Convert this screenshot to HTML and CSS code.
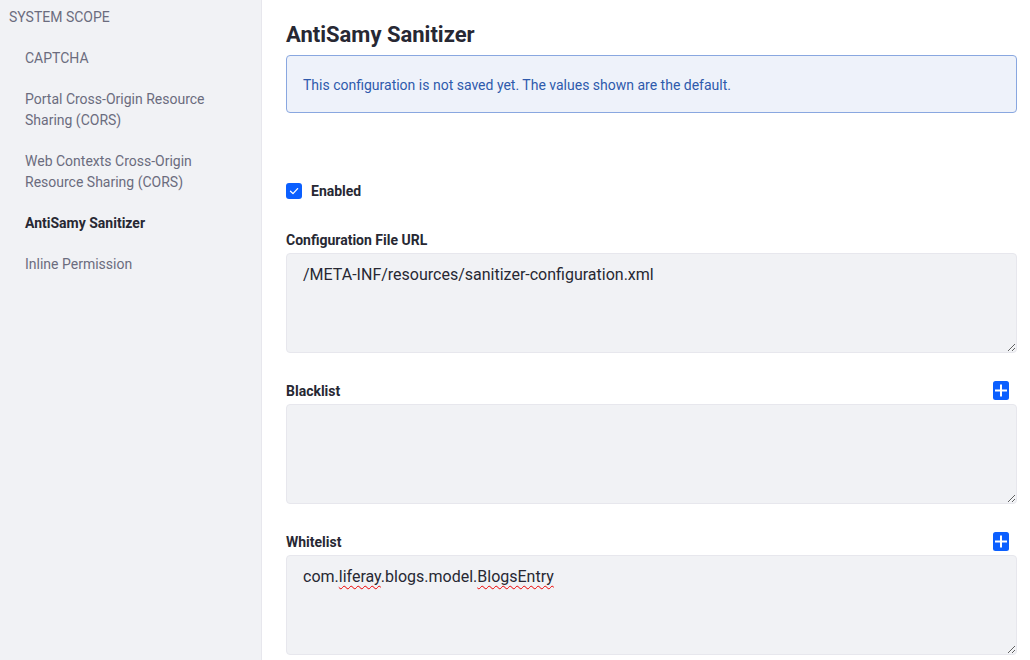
FILE: index.html
```html
<!DOCTYPE html>
<html>
<head>
<meta charset="utf-8">
<link rel="stylesheet" href="styles.css">
</head>
<body>
<div class="page">
  <nav class="sidebar">
    <div class="scope">SYSTEM SCOPE</div>
    <ul class="nav">
      <li>CAPTCHA</li>
      <li>Portal Cross-Origin Resource Sharing (CORS)</li>
      <li>Web Contexts Cross-Origin Resource Sharing (CORS)</li>
      <li class="active">AntiSamy Sanitizer</li>
      <li>Inline Permission</li>
    </ul>
  </nav>
  <main class="main">
    <h1 class="title">AntiSamy Sanitizer</h1>
    <div class="alert">This configuration is not saved yet. The values shown are the default.</div>
    <label class="check-row">
      <span class="checkbox"><svg width="16" height="16" viewBox="0 0 16 16"><path d="M4.5 8.2 L7 10.6 L11.6 5.6" fill="none" stroke="#fff" stroke-width="1.3" stroke-linecap="round" stroke-linejoin="round"/></svg></span>
      <span class="check-label">Enabled</span>
    </label>
    <div class="group">
      <div class="label-row"><span class="label">Configuration File URL</span></div>
      <div class="field">/META-INF/resources/sanitizer-configuration.xml</div>
    </div>
    <div class="group">
      <div class="label-row"><span class="label">Blacklist</span>
        <span class="add"><svg width="16" height="19" viewBox="0 0 16 19"><rect x="0" y="0" width="16" height="19" rx="2.5" fill="#0b5fff"/><path d="M8 3.5 V15.5 M2 9.5 H14" stroke="#fff" stroke-width="2"/></svg></span>
      </div>
      <div class="field"></div>
    </div>
    <div class="group">
      <div class="label-row"><span class="label">Whitelist</span>
        <span class="add"><svg width="16" height="19" viewBox="0 0 16 19"><rect x="0" y="0" width="16" height="19" rx="2.5" fill="#0b5fff"/><path d="M8 3.5 V15.5 M2 9.5 H14" stroke="#fff" stroke-width="2"/></svg></span>
      </div>
      <div class="field">com.<span class="sp">liferay</span>.blogs.model.<span class="sp">BlogsEntry</span></div>
    </div>
  </main>
</div>
</body>
</html>
```
FILE: styles.css
```css
html, body {
  margin: 0;
  padding: 0;
  height: 100%;
  overflow: hidden;
  background: #fff;
  font-family: Roboto, "Liberation Sans", sans-serif;
  color: #272833;
}
.page {
  display: flex;
  height: 660px;
}
.sidebar {
  width: 261px;
  flex: none;
  background: #f1f2f5;
  border-right: 1px solid #e7e7ed;
  box-sizing: content-box;
}
.scope {
  font-size: 14px;
  line-height: 21px;
  color: #6b6c7e;
  padding: 7px 9px 10px;
}
.nav {
  list-style: none;
  margin: 0;
  padding: 0;
}
.nav li {
  font-size: 14px;
  line-height: 21px;
  color: #6b6c7e;
  padding: 10px 40px 10px 25px;
}
.nav li.active {
  color: #272833;
  font-weight: 700;
}
.main {
  flex: 1;
  padding: 0 13px 0 24px;
}
.title {
  margin: 0 0 7px;
  padding-top: 22px;
  font-size: 22px;
  line-height: 26px;
  font-weight: 700;
  color: #272833;
}
.alert {
  background: #eef2fa;
  border: 1px solid #89a7e0;
  border-radius: 4px;
  color: #2e5aac;
  font-size: 14px;
  line-height: 22px;
  padding: 18px 16px 16px;
}
.check-row {
  display: flex;
  align-items: center;
  margin-top: 68px;
  height: 21px;
}
.checkbox {
  width: 16px;
  height: 16px;
  background: #0b5fff;
  border-radius: 3px;
  display: flex;
  margin-right: 9px;
  margin-top: -1px;
}
.check-label {
  font-size: 14px;
  font-weight: 700;
  line-height: 21px;
}
.group {
  margin-top: 26px;
}
.group + .group {
  margin-top: 26px;
}
.label-row {
  display: flex;
  justify-content: space-between;
  align-items: center;
  height: 22px;
  padding-top: 1px;
  margin-bottom: 2px;
}
.label {
  font-size: 14px;
  font-weight: 700;
  line-height: 21px;
}
.add {
  display: flex;
  margin-right: 8px;
  margin-top: -2px;
}
.field {
  height: 100px;
  box-sizing: border-box;
  background: #f1f2f5;
  border: 1px solid #e7e7ed;
  border-radius: 4px;
  font-size: 16px;
  line-height: 24px;
  padding: 9px 16px 7px;
  color: #272833;
  resize: vertical;
  overflow: auto;
}
.sp {
  text-decoration: underline wavy #e00;
  text-decoration-thickness: 1px;
  text-underline-offset: 3px;
  text-decoration-skip-ink: none;
}
```
